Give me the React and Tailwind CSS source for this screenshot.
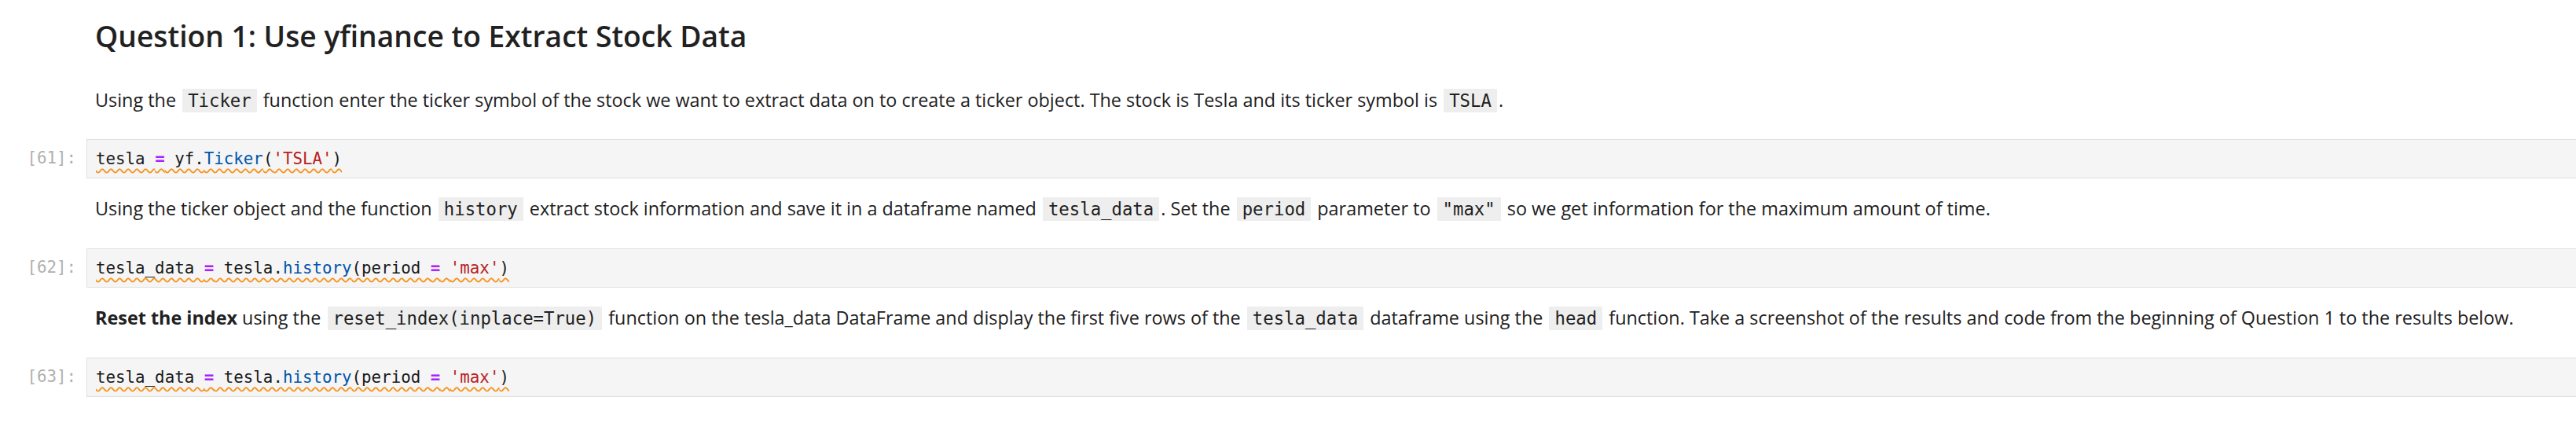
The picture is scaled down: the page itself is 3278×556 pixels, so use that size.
import React from "react";

const sans = { fontFamily: '"Open Sans", "Noto Sans", sans-serif' };

function IC({ children }) {
  return (
    <code className="bg-[#eeeeee] px-[7px] py-[2px] mx-[2px] font-['DejaVu_Sans_Mono',monospace] text-[22.3px] text-[#212121]">
      {children}
    </code>
  );
}

function Prompt({ n }) {
  return (
    <div className="w-[110px] shrink-0 pr-[13px] text-right font-['DejaVu_Sans_Mono',monospace] text-[20.8px] text-[#b0b0b0]">
      [{n}]:
    </div>
  );
}

const wavy =
  "underline decoration-wavy decoration-[#f7931e] decoration-[1.5px] underline-offset-[5px]";

function CodeCell({ n, children, mt }) {
  return (
    <div className={`flex items-center ${mt}`}>
      <Prompt n={n} />
      <div className="flex-1 h-[50px] flex items-center bg-[#f5f5f5] border border-r-0 border-[#e0e0e0] pl-[11px]">
        <pre className="font-['DejaVu_Sans_Mono',monospace] text-[20.8px] text-[#1a1a1a] leading-none">
          <span className={wavy}>{children}</span>
        </pre>
      </div>
    </div>
  );
}

function MdRow({ h, children, className = "" }) {
  return (
    <div className={`flex items-center ${h}`}>
      <div className="w-[110px] shrink-0" />
      <div className={`pl-[11px] text-[#212121] ${className}`} style={sans}>
        {children}
      </div>
    </div>
  );
}

const EQ = () => <span className="text-[#aa22ff] font-bold">=</span>;

export default function App() {
  return (
    <div className="w-[3278px] h-[556px] bg-white overflow-hidden">
      <MdRow h="h-[89px]" className="text-[37.2px] font-semibold leading-[44px] pt-[2px]">
        Question 1: Use yfinance to Extract Stock Data
      </MdRow>
      <MdRow h="h-[76px]" className="text-[23.4px] leading-[32px]">
        Using the <IC>Ticker</IC> function enter the ticker symbol of the stock we want to extract data on to create a ticker object. The stock is Tesla and its ticker symbol is <IC>TSLA</IC>.
      </MdRow>
      <CodeCell n={61} mt="mt-[12px]">
        tesla <EQ /> yf.<span className="text-[#0055aa]">Ticker</span>(<span className="text-[#ba2121]">'TSLA'</span>)
      </CodeCell>
      <MdRow h="h-[77px]" className="text-[23.4px] leading-[32px]">
        Using the ticker object and the function <IC>history</IC> extract stock information and save it in a dataframe named <IC>tesla_data</IC>. Set the <IC>period</IC> parameter to <IC>"max"</IC> so we get information for the maximum amount of time.
      </MdRow>
      <CodeCell n={62} mt="mt-[12px]">
        tesla_data <EQ /> tesla.<span className="text-[#0055aa]">history</span>(period <EQ /> <span className="text-[#ba2121]">'max'</span>)
      </CodeCell>
      <MdRow h="h-[77px]" className="text-[23.4px] leading-[32px]">
        <b className="font-bold">Reset the index</b> using the <IC>reset_index(inplace=True)</IC> function on the tesla_data DataFrame and display the first five rows of the <IC>tesla_data</IC> dataframe using the <IC>head</IC> function. Take a screenshot of the results and code from the beginning of Question 1 to the results below.
      </MdRow>
      <CodeCell n={63} mt="mt-[12px]">
        tesla_data <EQ /> tesla.<span className="text-[#0055aa]">history</span>(period <EQ /> <span className="text-[#ba2121]">'max'</span>)
      </CodeCell>
    </div>
  );
}
